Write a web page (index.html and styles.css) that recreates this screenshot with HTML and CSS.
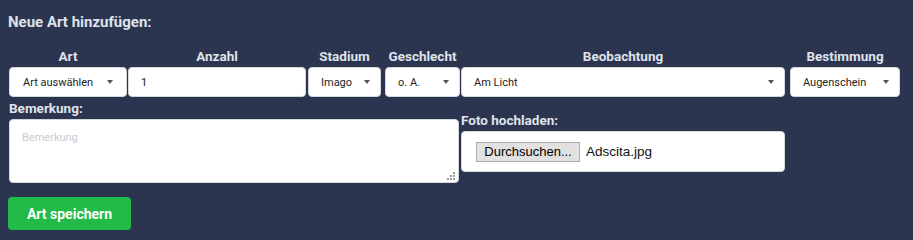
FILE: index.html
```html
<!DOCTYPE html>
<html lang="de">
<head>
<meta charset="utf-8">
<title>Neue Art hinzufügen</title>
<link rel="stylesheet" href="styles.css">
</head>
<body>
<div class="page">
  <h2 class="title">Neue Art hinzufügen:</h2>
  <div class="row-top">
    <div class="cell c-art">
      <div class="lbl">Art</div>
      <div class="box select w-art"><span>Art auswählen</span><i class="caret"></i></div>
    </div>
    <div class="cell c-anz">
      <div class="lbl">Anzahl</div>
      <div class="box w-anz"><span>1</span></div>
    </div>
    <div class="cell c-sta">
      <div class="lbl">Stadium</div>
      <div class="box select w-sta"><span>Imago</span><i class="caret"></i></div>
    </div>
    <div class="cell c-ges">
      <div class="lbl">Geschlecht</div>
      <div class="box select w-ges"><span>o. A.</span><i class="caret"></i></div>
    </div>
    <div class="cell c-beo">
      <div class="lbl">Beobachtung</div>
      <div class="box select w-beo"><span>Am Licht</span><i class="caret"></i></div>
    </div>
    <div class="cell c-best">
      <div class="lbl">Bestimmung</div>
      <div class="box select w-best"><span>Augenschein</span><i class="caret"></i></div>
    </div>
  </div>
  <div class="row-mid">
    <div class="col-note">
      <div class="lbl-left">Bemerkung:</div>
      <div class="note-wrap">
        <textarea class="note" placeholder="Bemerkung"></textarea>
        <svg class="grip" width="8" height="8" viewBox="0 0 8 8" aria-hidden="true">
          <rect x="6" y="0" width="2" height="2" fill="#9c9c9c"/>
          <rect x="3" y="3" width="2" height="2" fill="#9c9c9c"/>
          <rect x="6" y="3" width="2" height="2" fill="#9c9c9c"/>
          <rect x="0" y="6" width="2" height="2" fill="#9c9c9c"/>
          <rect x="3" y="6" width="2" height="2" fill="#9c9c9c"/>
          <rect x="6" y="6" width="2" height="2" fill="#9c9c9c"/>
        </svg>
      </div>
    </div>
    <div class="col-photo">
      <div class="lbl-left">Foto hochladen:</div>
      <div class="filebox">
        <span class="filebtn">Durchsuchen...</span>
        <span class="filename">Adscita.jpg</span>
      </div>
    </div>
  </div>
  <button class="save">Art speichern</button>
</div>
</body>
</html>
```

FILE: styles.css
```css
html, body {
  margin: 0;
  padding: 0;
  background: #2c3550;
}
body {
  width: 913px;
  height: 240px;
  overflow: hidden;
  font-family: Roboto, "Liberation Sans", sans-serif;
}
.page {
  padding: 13px 8px 0 8px;
}
.title {
  margin: 0;
  font-size: 15px;
  line-height: 18px;
  font-weight: 700;
  color: #dfe3ea;
}
.row-top {
  display: flex;
  margin: 17px 0 0 1px;
}
.cell {
  display: flex;
  flex-direction: column;
}
.c-art { width: 119px; }
.c-anz { width: 180px; }
.c-sta { width: 77px; }
.c-ges { width: 76px; }
.c-beo { width: 329px; }
.c-best { width: 110px; }
.lbl {
  font-size: 13.5px;
  line-height: 16px;
  font-weight: 700;
  color: #dfe3ea;
  height: 16px;
  margin-bottom: 3px;
  text-align: center;
  white-space: nowrap;
}
.w-art { width: 118px; }
.w-anz { width: 178px; }
.w-sta { width: 73px; }
.w-ges { width: 75px; }
.w-beo { width: 324px; }
.w-best { width: 110px; }
.c-art .lbl { width: 118px; }
.c-anz .lbl { width: 178px; }
.c-sta .lbl { width: 73px; }
.c-ges .lbl { width: 75px; }
.c-beo .lbl { width: 324px; }
.c-best .lbl { width: 110px; }
.box {
  box-sizing: border-box;
  height: 30px;
  background: #fff;
  border: 1px solid #d4d7dd;
  border-radius: 4px;
  display: flex;
  align-items: center;
  padding: 0 10px 0 12px;
  font-size: 11px;
  color: #1e1e1e;
  white-space: nowrap;
}
.select {
  justify-content: space-between;
}
.c-art .box { padding-left: 13px; padding-right: 13px; }
.caret {
  flex: none;
  width: 0;
  height: 0;
  border-left: 3.5px solid transparent;
  border-right: 3.5px solid transparent;
  border-top: 4px solid #555;
}
.row-mid {
  display: flex;
  align-items: flex-start;
  margin: 3px 0 0 1px;
}
.lbl-left {
  font-size: 13.5px;
  line-height: 16px;
  font-weight: 700;
  color: #dfe3ea;
  margin-bottom: 3px;
}
.col-note {
  width: 450px;
}
.note-wrap {
  position: relative;
  height: 64px;
}
.note {
  box-sizing: border-box;
  width: 450px;
  height: 64px;
  display: block;
  margin: 0;
  resize: none;
  border: 1px solid #d4d7dd;
  border-radius: 4px;
  background: #fff;
  padding: 11px 12px;
  font-family: Roboto, "Liberation Sans", sans-serif;
  font-size: 11px;
  color: #222;
  outline: none;
}
.note::placeholder {
  color: #c9cbd0;
}
.grip {
  position: absolute;
  right: 4px;
  bottom: 3px;
}
.col-photo {
  width: 324px;
  margin: 12px 0 0 2px;
}
.filebox {
  box-sizing: border-box;
  height: 41px;
  background: #fff;
  border: 1px solid #d4d7dd;
  border-radius: 4px;
  display: flex;
  align-items: center;
  padding-left: 14px;
  font-family: "Liberation Sans", Arial, sans-serif;
  font-size: 13px;
  color: #111;
}
.filebtn {
  box-sizing: border-box;
  width: 104px;
  height: 20px;
  display: flex;
  align-items: center;
  justify-content: center;
  background: #e1e1e1;
  border: 1px solid #adadad;
  color: #000;
}
.filename {
  margin-left: 6px;
  font-size: 13.5px;
}
.save {
  display: block;
  margin: 14px 0 0 0;
  box-sizing: border-box;
  width: 123px;
  height: 33px;
  border: none;
  border-radius: 4px;
  background: #22bb47;
  color: #fff;
  font-family: Roboto, "Liberation Sans", sans-serif;
  font-size: 14px;
  font-weight: 700;
  padding: 0;
}
```
